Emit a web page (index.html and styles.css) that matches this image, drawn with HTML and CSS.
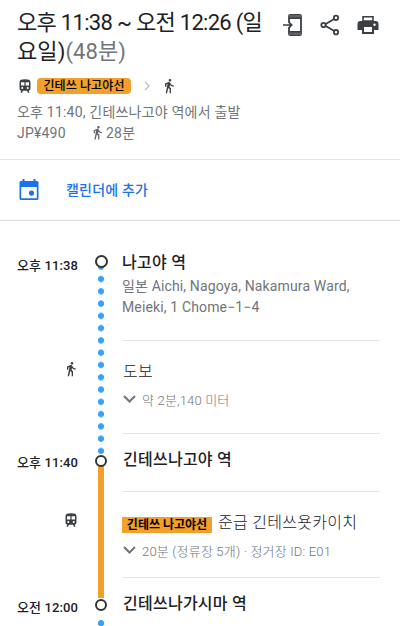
FILE: index.html
```html
<!DOCTYPE html>
<html lang="ko">
<head>
  <meta charset="UTF-8">
  <meta name="viewport" content="width=device-width, initial-scale=1.0">
  <title>나고야 역 경로</title>
  <link rel="stylesheet" href="styles.css">
</head>
<body>
  <svg width="0" height="0" class="symbols">
    <symbol id="walk" viewBox="0 0 24 24"><path d="M13.5 5.5c1.1 0 2-.9 2-2s-.9-2-2-2-2 .9-2 2 .9 2 2 2zM9.8 8.9L7 23h2.1l1.8-8 2.1 2v6h2v-7.500l-2.100-2 .6-3C14.800 12 16.800 13 19 13v-2c-1.900 0-3.500-1-4.300-2.400l-1-1.600c-.4-.6-1-1-1.700-1-.3 0-.5.1-.8.1L6 8.300V13h2V9.600l1.800-.7"/></symbol>
    <symbol id="train" viewBox="2.500 0.500 19 23"><path d="M12 1C6 1 3 2 3 6v10c0 2 1.300 3.300 3 3.700L4.500 23h2.600l1.600-3h6.600l1.600 3h2.600L18 19.700c1.700-.4 3-1.700 3-3.700V6c0-4-3-5-9-5zM7.500 17a1.700 1.700 0 1 1 0-3.400 1.700 1.700 0 0 1 0 3.400zM11 11H5.500V6H11v5zm5.500 6a1.700 1.700 0 1 1 0-3.400 1.700 1.700 0 0 1 0 3.400zm2-6H13V6h5.500v5z"/></symbol>
    <symbol id="down" viewBox="0 0 13 8"><path d="M1 1l5.500 5.500L12 1" fill="none" stroke="#70757a" stroke-width="2"/></symbol>
  </svg>

  <header class="summary">
    <div class="top">
      <h1 class="title">
        <div class="line1">오후 11:38 ~ 오전 12:26 (일</div>
        <div class="line2">요일)<span class="duration">(48분)</span></div>
      </h1>
      <div class="actions">
        <svg width="20" height="24" viewBox="0 0 20 24"><path d="M6 9V3c0-.8.4-1.200 1.200-1.200h9.600c.8 0 1.200.4 1.200 1.200v18c0 .8-.4 1.200-1.200 1.200H7.200C6.400 22.200 6 21.800 6 21v-6M6 5h12M6 19h12" fill="none" stroke="#3c4043" stroke-width="1.800"/><path d="M6 2h12v2.500H6zM6 19.500h12V22H6z" fill="#5f6368"/><path d="M0 12h8M5.500 8.800L8.700 12l-3.200 3.200" fill="none" stroke="#3c4043" stroke-width="1.700"/></svg>
        <svg width="20" height="22" viewBox="0 0 20 22"><path d="M4 11l12-7M4 11l12 7" stroke="#3c4043" stroke-width="1.800"/><g fill="#fff" stroke="#3c4043" stroke-width="1.800"><circle cx="3.500" cy="11" r="2.200"/><circle cx="16" cy="3.800" r="2.200"/><circle cx="16" cy="18.200" r="2.200"/></g></svg>
        <svg width="22" height="20" viewBox="0 0 22 20"><path d="M3.500 6h15A3 3 0 0 1 21.500 9v6H17v4H5v-4H.5V9a3 3 0 0 1 3-3zM7 12v5h8v-5H7zm10.500-3.500a1.200 1.200 0 1 0 0 2.400 1.200 1.200 0 0 0 0-2.400z" fill-rule="evenodd"/><path d="M6 6V1.800h10V6z" fill="#fff" stroke="#3c4043" stroke-width="1.600"/></svg>
      </div>
    </div>
    <div class="modes">
      <svg width="12" height="14"><use href="#train"/></svg>
      <span class="badge">긴테쓰 나고야선</span>
      <svg class="arrow" width="6" height="10" viewBox="0 0 6 10"><path d="M1 1l4 4-4 4" fill="none" stroke="#bdc1c6" stroke-width="1.400"/></svg>
      <svg width="16" height="16"><use href="#walk"/></svg>
    </div>
    <div class="departs">오후 11:40, 긴테쓰나고야 역에서 출발</div>
    <div class="fare">
      <span class="price">JP¥490</span>
      <svg width="15" height="15"><use href="#walk"/></svg>
      <span>28분</span>
    </div>
  </header>

  <div class="calendar">
    <svg width="20" height="22" viewBox="0 0 20 22"><path d="M3.500 0h2v2h9V0h2v2H18a1.500 1.500 0 0 1 1.500 1.500v16A1.500 1.500 0 0 1 18 21H2A1.500 1.500 0 0 1 .5 19.500v-16A1.500 1.500 0 0 1 2 2h1.500zM2.200 8v11.300h15.600V8zM12.500 11.500a2.600 2.600 0 1 1 0 5.200 2.600 2.600 0 0 1 0-5.200z" fill="#1a73e8" fill-rule="evenodd"/></svg>
    <span>캘린더에 추가</span>
  </div>

  <main class="timeline">
    <section class="leg walk-leg">
      <div class="side">
        <time>오후 11:38</time>
        <svg width="16" height="16"><use href="#walk"/></svg>
      </div>
      <div class="track dotted"><i class="node bold"></i></div>
      <div class="content">
        <div class="stop">
          <h2>나고야 역</h2>
          <p class="addr">일본 Aichi, Nagoya, Nakamura Ward,<br>Meieki, 1 Chome−1−4</p>
        </div>
        <div class="ride">
          <div class="ride-name walk-name">도보</div>
          <div class="detail"><svg width="13" height="8"><use href="#down"/></svg><span>약 2분,140 미터</span></div>
        </div>
      </div>
    </section>

    <section class="leg train-leg">
      <div class="side">
        <time>오후 11:40</time>
        <svg width="12" height="14"><use href="#train"/></svg>
      </div>
      <div class="track solid"><i class="node"></i></div>
      <div class="content">
        <div class="stop"><h2>긴테쓰나고야 역</h2></div>
        <div class="ride">
          <div class="ride-name"><span class="badge square">긴테쓰 나고야선</span><span>준급 긴테쓰욧카이치</span></div>
          <div class="detail"><svg width="13" height="8"><use href="#down"/></svg><span>20분 (정류장 5개) · 정거장 ID: E01</span></div>
        </div>
      </div>
    </section>

    <section class="leg last-leg">
      <div class="side"><time>오전 12:00</time></div>
      <div class="track dotted"><i class="node"></i></div>
      <div class="content">
        <div class="stop"><h2>긴테쓰나가시마 역</h2></div>
      </div>
    </section>
  </main>
</body>
</html>
```

FILE: styles.css
```css
* {
  box-sizing: border-box;
}

body {
  margin: 0;
  height: 626px;
  overflow: hidden;
  background: #fff;
  color: #202124;
  font-family: Roboto, "Noto Sans CJK KR", sans-serif;
  font-size: 14px;
  white-space: nowrap;
}

svg {
  display: block;
  flex: none;
  fill: #3c4043;
}

.symbols {
  position: absolute;
}

h1, h2, p {
  margin: 0;
  font-weight: 400;
}

/* summary */
.summary {
  height: 160px;
  padding: 8px 0 0 17px;
  border-bottom: 1px solid #e3e4e6;
}

.top {
  display: flex;
  height: 64px;
}

.title {
  width: 266px;
  font-size: 22px;
  line-height: 29px;
}

.line1 {
  letter-spacing: -0.7px;
}

.line2 {
  letter-spacing: 0.1px;
}

.duration {
  color: #70757a;
}

.actions {
  display: flex;
  align-items: center;
  height: 33px;
  gap: 17px;
}

.modes {
  display: flex;
  align-items: center;
  height: 28px;
  padding-left: 2px;
}

.badge {
  display: flex;
  align-items: center;
  justify-content: center;
  width: 94px;
  height: 16px;
  margin-left: 6px;
  border-radius: 4px;
  background: #f29f2c;
  color: #000;
  font-size: 12px;
  font-weight: 500;
  line-height: 16px;
  letter-spacing: 0.1px;
}

.arrow {
  margin: 0 11px 0 13px;
}

.departs, .fare {
  color: #70757a;
  height: 21px;
  line-height: 24px;
  letter-spacing: 0.2px;
}

.fare {
  display: flex;
  align-items: center;
}

.fare span {
  margin-top: 2px;
}

.price {
  width: 73px;
}

.fare svg {
  fill: #5f6368;
  margin: 2px 1px 0 0;
}

/* calendar row */
.calendar {
  display: flex;
  align-items: center;
  gap: 27px;
  height: 61px;
  padding-left: 19px;
  border-bottom: 1px solid #dadce0;
  color: #1a73e8;
  font-weight: 500;
}

.calendar span {
  margin-top: -3px;
  letter-spacing: 0.2px;
}

/* timeline */
.timeline {
  padding-top: 33px;
}

.leg {
  display: grid;
  grid-template-columns: 92px 18px 270px;
}

.walk-leg {
  height: 200px;
}

.train-leg {
  height: 144px;
}

.last-leg {
  height: 28px;
}

.side {
  padding-left: 17px;
}

time {
  display: block;
  font-size: 13px;
  font-weight: 500;
  line-height: 20px;
  letter-spacing: 0.1px;
}

.side svg {
  margin-left: 46px;
}

.walk-leg .side {
  padding-top: 2px;
}

.walk-leg .side svg {
  margin-top: 85px;
}

.train-leg .side svg {
  margin-top: 40px;
  margin-left: 48px;
}

.train-leg time {
  margin-top: -1px;
}

.track {
  display: flex;
  justify-content: center;
}

/* the dots start below the centre of the node */
.dotted {
  background: radial-gradient(circle, #36a1ff 2.8px, transparent 3.4px) 0 5.6px / 18px 12.29px repeat-y content-box;
  padding-top: 1px;
}

.last-leg .dotted {
  background-position: 0 17.500px;
  background-repeat: no-repeat;
}

.solid {
  background: linear-gradient(#f29f2c, #f29f2c) center 6px / 6px 100% no-repeat;
}

.node {
  width: 12px;
  height: 12px;
  margin-top: 1px;
  border: 2px solid #333;
  border-radius: 50%;
  background: #fff;
}

.dotted .node {
  margin-top: 0;
}

.node.bold {
  width: 13px;
  height: 13px;
  border-width: 2.5px;
  /* covers the dot above the first stop */
  box-shadow: 0 -4px 0 #fff;
}

.content {
  padding-left: 12px;
}

.stop {
  height: 38px;
  border-bottom: 1px solid #e3e4e6;
}

.walk-leg .stop {
  height: 87px;
}

.last-leg .stop {
  height: 28px;
  border: none;
}

h2 {
  height: 20px;
  padding-left: 1px;
  font-size: 16px;
  font-weight: 500;
  line-height: 12px;
  letter-spacing: 0.25px;
}

.walk-leg h2 {
  height: 22px;
  padding-left: 0;
  line-height: 18px;
}

.addr {
  color: #70757a;
  line-height: 21px;
  letter-spacing: 0.14px;
}

.ride {
  height: 93px;
  padding-top: 20px;
  border-bottom: 1px solid #e3e4e6;
}

.train-leg .ride {
  height: 86px;
}

.ride-name {
  display: flex;
  align-items: center;
  height: 22px;
  font-size: 16px;
  font-weight: 300;
  line-height: 22px;
  letter-spacing: 0.3px;
}

.walk-name {
  padding-left: 1px;
}

.square {
  width: 90px;
  margin: 4px 6px 0 0;
  border-radius: 0;
  font-weight: 700;
  letter-spacing: 0;
}

.detail {
  display: flex;
  align-items: center;
  gap: 6px;
  height: 20px;
  margin-top: 6px;
  padding-left: 1px;
  color: #70757a;
  font-size: 13px;
  font-weight: 300;
  letter-spacing: 0.18px;
}
```
